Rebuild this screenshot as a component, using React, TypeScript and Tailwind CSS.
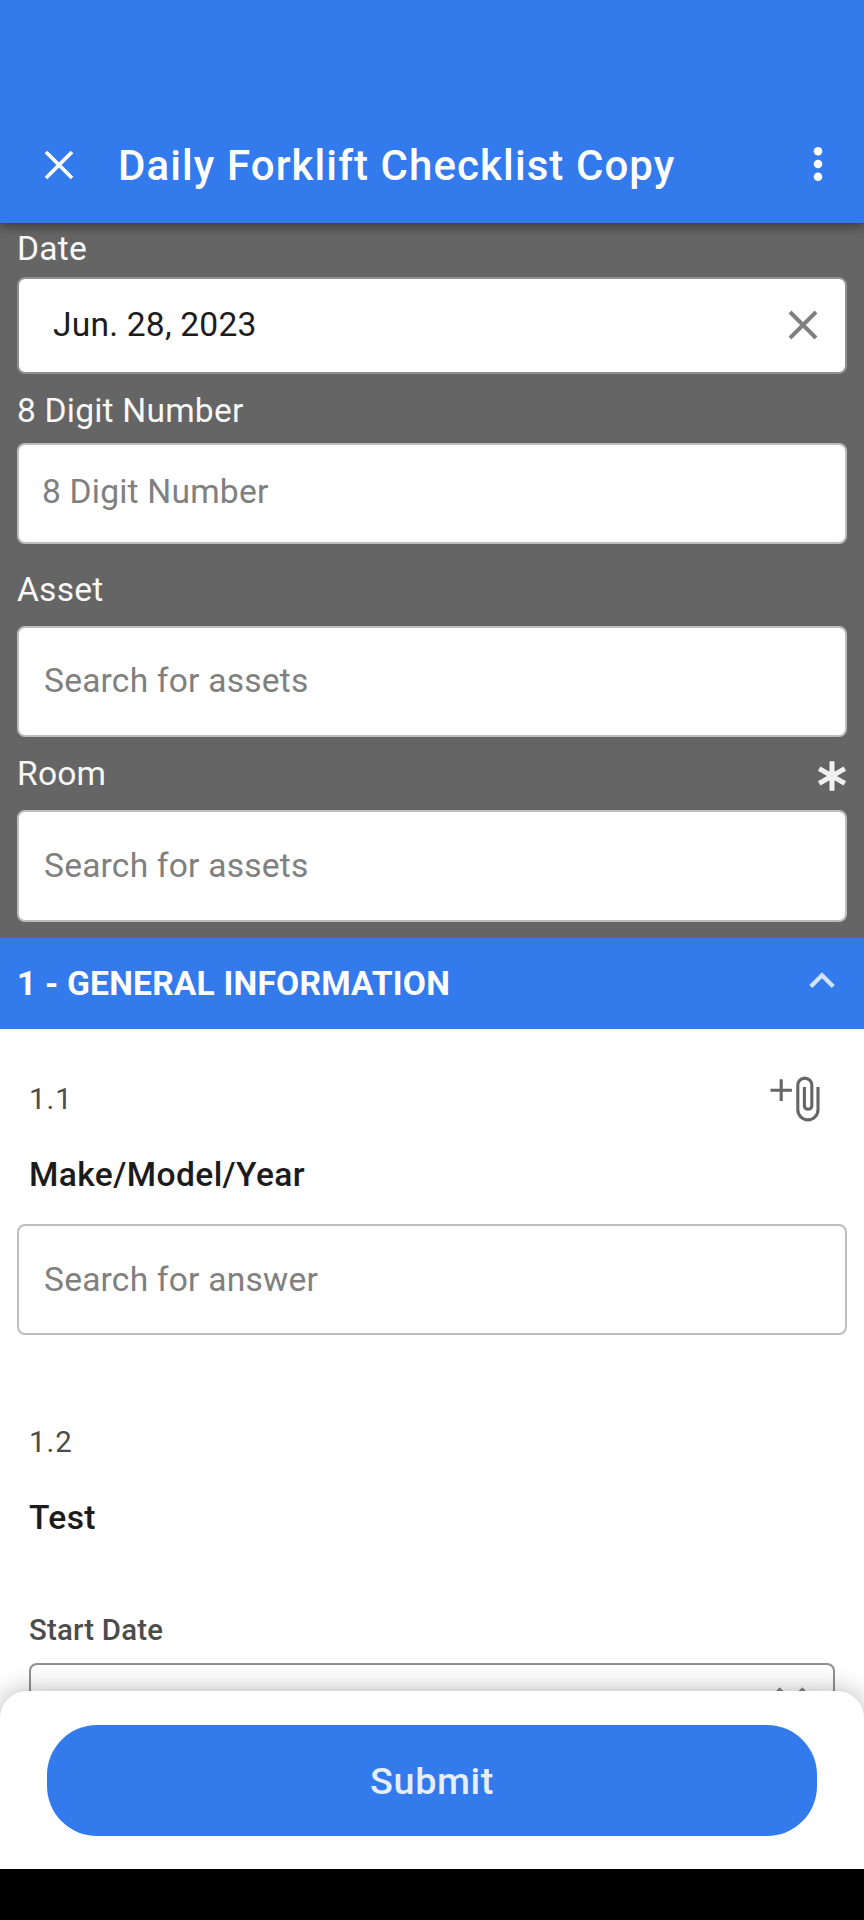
import { type ReactNode } from "react";
import clsx from "clsx";

interface IconProps {
  className?: string;
}

function CrossIcon({ className }: IconProps) {
  return (
    <svg viewBox="0 0 30 30" fill="none" stroke="currentColor" className={className}>
      <path d="M2 2 28 28M28 2 2 28" />
    </svg>
  );
}

function MoreIcon({ className }: IconProps) {
  return (
    <svg viewBox="0 0 10 36" fill="currentColor" className={className}>
      <circle cx="5" cy="5.3" r="4.3" />
      <circle cx="5" cy="18" r="4.3" />
      <circle cx="5" cy="30.7" r="4.3" />
    </svg>
  );
}

function RequiredIcon({ className }: IconProps) {
  return (
    <svg
      viewBox="0 0 30 30"
      fill="none"
      stroke="currentColor"
      strokeWidth="5"
      className={className}
    >
      <path d="M15 0.2v29.6M2.2 7.6l25.6 14.8M27.8 7.6 2.2 22.4" />
    </svg>
  );
}

function ChevronUpIcon({ className }: IconProps) {
  return (
    <svg viewBox="0 0 26 18" fill="none" stroke="currentColor" strokeWidth="4.2" className={className}>
      <path d="M1.8 15.4 13 4.2l11.2 11.2" />
    </svg>
  );
}

function AttachIcon({ className }: IconProps) {
  return (
    <svg viewBox="0 0 50 46" fill="none" stroke="currentColor" strokeWidth="3.1" className={className}>
      <path d="M11.2 3.3v21.8M0.5 14.2h21.4" />
      <path d="M48 11v22.8a10 10 0 0 1-20.2 0V9.1a7 7 0 0 1 14 0v21.2a3.8 3.8 0 0 1-7.4 0V11" />
    </svg>
  );
}

interface FieldLabelProps {
  className?: string;
  required?: boolean;
  children: ReactNode;
}

function FieldLabel({ className, required, children }: FieldLabelProps) {
  return (
    <div className={clsx("flex justify-between px-[17px] text-[#f8f8f8]", className)}>
      <span className="leading-10">{children}</span>
      {required && <RequiredIcon className="mt-[7px] size-[30px] text-[#f2f2f2]" />}
    </div>
  );
}

interface FieldBoxProps {
  className?: string;
  children?: ReactNode;
}

function FieldBox({ className, children }: FieldBoxProps) {
  return (
    <div
      className={clsx(
        "mx-[17px] flex items-center justify-between rounded-lg border-2 bg-white text-[#808080]",
        className,
      )}
    >
      {children}
    </div>
  );
}

export default function App() {
  return (
    <div className="relative flex h-[1920px] w-[864px] flex-col overflow-hidden bg-white font-[Roboto,sans-serif] text-[33.6px] leading-10 tracking-[0.2px]">
      <header className="relative z-10 flex h-[223px] shrink-0 items-end bg-[#337aed] pr-[41px] pb-[29px] pl-[44px] text-white shadow-[0_4px_10px_rgba(0,0,0,0.4)]">
        <CrossIcon className="mb-[14px] size-[30px] stroke-[3.8]" />
        <h1 className="ml-[44px] text-[42px] leading-[56px] font-medium tracking-[1.08px]">
          Daily Forklift Checklist Copy
        </h1>
        <MoreIcon className="mb-[12px] ml-auto h-9 w-2.5" />
      </header>

      <section className="shrink-0 bg-[#656565] pb-4">
        <FieldLabel className="h-[54px] pt-[6px]">Date</FieldLabel>
        <FieldBox className="h-[97px] border-[#909090] pr-[27px] pb-px pl-[34px]">
          <span className="text-[#1c1c1c]">Jun. 28, 2023</span>
          <CrossIcon className="size-[30px] stroke-[4]" />
        </FieldBox>

        <FieldLabel className="h-[69px] pt-[17px]">8 Digit Number</FieldLabel>
        <FieldBox className="h-[101px] border-[#bdbdbd] pb-[3px] pl-[23px]">8 Digit Number</FieldBox>

        <FieldLabel className="h-[82px] pt-[26px]">Asset</FieldLabel>
        <FieldBox className="h-[111px] border-[#bdbdbd] pb-px pl-[25px]">Search for assets</FieldBox>

        <FieldLabel className="h-[73px] pt-[17px]" required>
          Room
        </FieldLabel>
        <FieldBox className="h-[112px] border-[#bdbdbd] pl-[25px]">Search for assets</FieldBox>
      </section>

      <div className="flex h-[91px] shrink-0 items-center justify-between bg-[#337aed] pr-[29px] pl-[17px] text-white">
        <h2 className="font-bold">1 - GENERAL INFORMATION</h2>
        <ChevronUpIcon className="mb-[8px] h-[18px] w-[26px] text-[#d0e4ff]" />
      </div>

      <section className="shrink-0 pt-[47px]">
        <div className="flex h-[79px] justify-between pr-[44px] pl-[29px]">
          <span className="pt-[5px] text-[29.4px] leading-9 tracking-[1px] text-[#4c4c4c]">1.1</span>
          <AttachIcon className="h-[46px] w-[50px] text-[#666]" />
        </div>
        <h3 className="h-[69px] pl-[29px] font-medium tracking-[0.4px] text-[#1b1b1b]">Make/Model/Year</h3>
        <FieldBox className="h-[111px] border-[#bdbdbd] pl-[25px]">Search for answer</FieldBox>
      </section>

      <section className="shrink-0 px-[29px] pt-[89px]">
        <div className="h-[74px] text-[29.4px] leading-9 tracking-[1px] text-[#4c4c4c]">1.2</div>
        <h3 className="h-[114px] font-medium tracking-[0.4px] text-[#1b1b1b]">Test</h3>
        <div className="h-[51px] text-[29.4px] leading-9 font-medium text-[#4c4c4c]">Start Date</div>
        <div className="flex h-[97px] justify-end rounded-lg border-2 border-[#8f8f8f] pt-[22px] pr-[27px]">
          <CrossIcon className="size-[30px] stroke-[4.6] text-[#808080]" />
        </div>
      </section>

      <footer className="absolute inset-x-0 bottom-0 z-10">
        <div className="rounded-t-[27px] bg-white px-[47px] pt-[34px] pb-[33px] shadow-[0_0_26px_rgba(0,0,0,0.3)]">
          <button className="h-[111px] w-full rounded-[50px] bg-[#337aed] text-[37.8px] font-medium tracking-[0.6px] text-[#e4eefc]">
            Submit
          </button>
        </div>
        {/* system navigation bar */}
        <div className="relative h-[51px] bg-black" />
      </footer>
    </div>
  );
}
